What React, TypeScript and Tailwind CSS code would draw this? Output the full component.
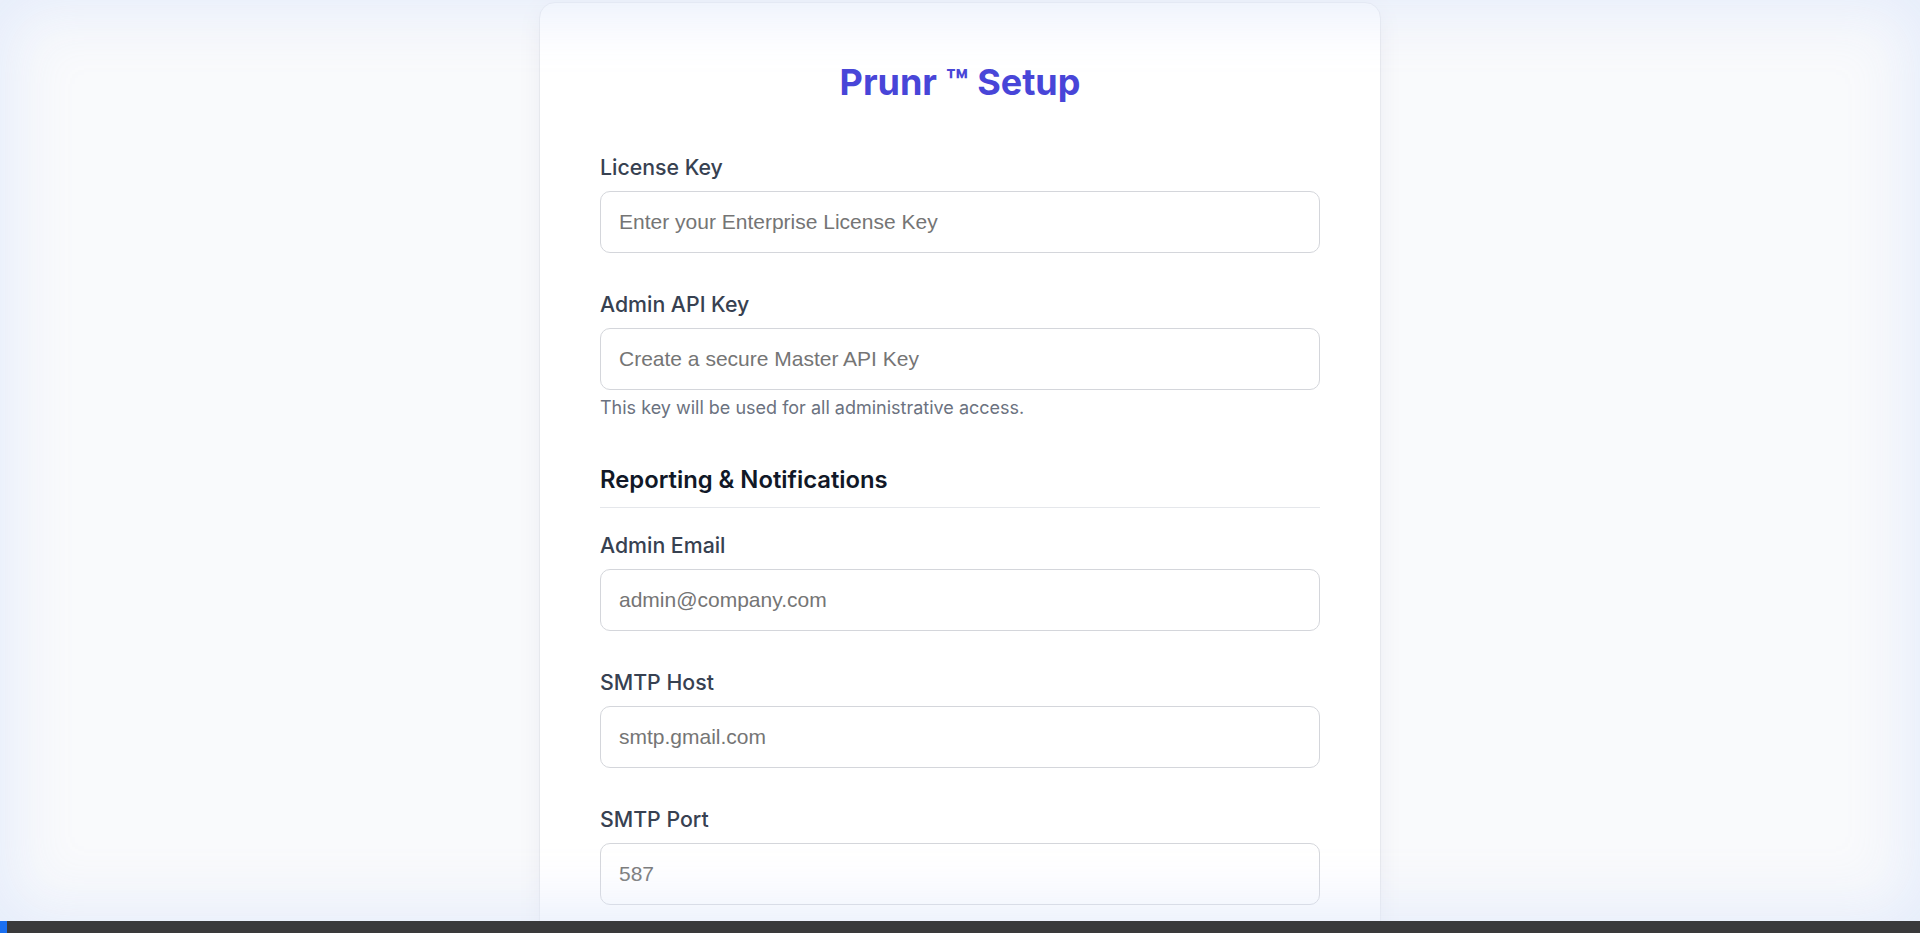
import type { ReactNode } from 'react'

function Field({ label, placeholder, hint, type = 'text' }: { label: string; placeholder: string; hint?: ReactNode; type?: string }) {
  return (
    <div className="mb-[36px]">
      <label className="block text-[21.3px] leading-[30px] font-medium text-[#374151] mb-[9px]">{label}</label>
      <input
        type={type}
        placeholder={placeholder}
        className="block w-full h-[62px] rounded-[10px] border border-[#d4d6db] bg-white px-[18px] font-['Liberation_Sans',Arial,sans-serif] text-[21px] text-[#374151] placeholder:text-[#757575] outline-none"
      />
      {hint && <p className="mt-[5px] text-[18px] leading-[25px] text-[#6b7280]">{hint}</p>}
    </div>
  )
}

export default function App() {
  return (
    <div className="relative h-[933px] overflow-hidden bg-[#f9fafc] font-['Inter','Noto_Sans',sans-serif]">
      <div className="flex justify-center pt-[2px]">
        <div className="w-[842px] rounded-2xl border border-[#e6e8ed] bg-white px-[60px] pt-[58px] pb-12 shadow-[0_4px_24px_rgba(30,41,80,0.06)]">
          <h1 className="text-center text-[36px] leading-[42px] font-bold text-[#4845d8] mb-[49px]">
            Prunr ™ Setup
          </h1>

          <Field label="License Key" placeholder="Enter your Enterprise License Key" />
          <div className="-mb-[31px]">
            <Field
              label="Admin API Key"
              placeholder="Create a secure Master API Key"
              hint="This key will be used for all administrative access."
            />
          </div>

          {/* Reporting */}
          <div className="mt-[76px] mb-[22px] border-b border-[#e5e7eb] pb-[12px]">
            <h2 className="text-[23.8px] leading-[30px] font-semibold text-[#111827]">Reporting &amp; Notifications</h2>
          </div>

          <Field label="Admin Email" placeholder="admin@company.com" type="email" />
          <Field label="SMTP Host" placeholder="smtp.gmail.com" />
          <Field label="SMTP Port" placeholder="587" />
        </div>
      </div>

      {/* soft vignette over the viewport */}
      <div className="pointer-events-none absolute inset-x-0 top-0 bottom-[12px] shadow-[inset_0_0_60px_12px_rgba(226,234,250,0.85)]" />

      {/* bottom bar */}
      <div className="absolute inset-x-0 bottom-0 h-[12px] bg-[#3a3a3b]">
        <div className="h-full w-[7px] bg-[#1a6ff0]" />
      </div>
    </div>
  )
}
